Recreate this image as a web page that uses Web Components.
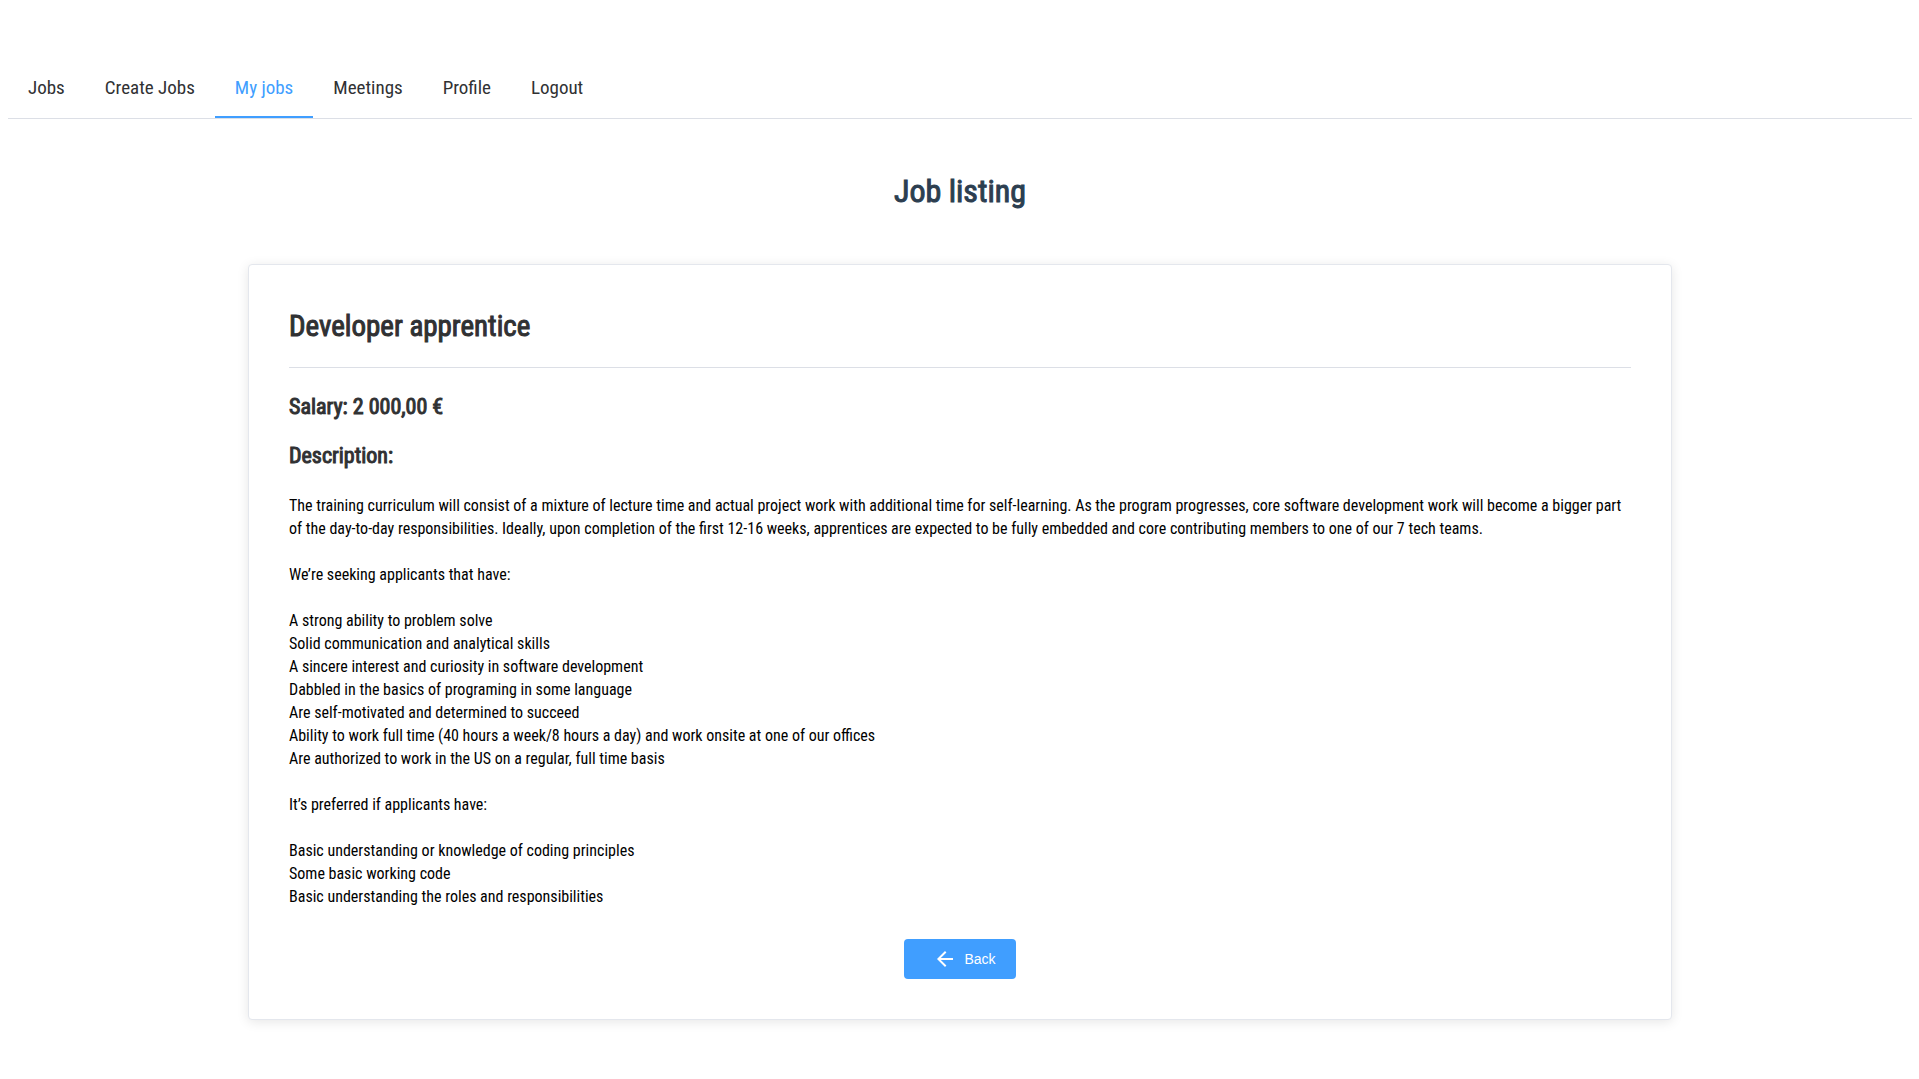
<!DOCTYPE html>
<html lang="en">
<head>
<meta charset="utf-8">
<title>Job listing</title>
<style>
body { margin: 0; padding: 58px 7px 59px 8px; background: #fff; color: #303133; font-family: "Roboto Condensed", "Liberation Sans Narrow", Roboto, sans-serif; }
</style>
</head>
<body>
<site-nav>
  <nav-item>Jobs</nav-item>
  <nav-item>Create Jobs</nav-item>
  <nav-item active>My jobs</nav-item>
  <nav-item>Meetings</nav-item>
  <nav-item>Profile</nav-item>
  <nav-item>Logout</nav-item>
</site-nav>
<job-page>
  <span slot="title">Job listing</span>
  <job-card>
    <span slot="name">Developer apprentice</span>
    <span slot="salary">2 000,00 €</span>
    <span slot="description">The training curriculum will consist of a mixture of lecture time and actual project work with additional time for self-learning. As the program progresses, core software development work will become a bigger part of the day-to-day responsibilities. Ideally, upon completion of the first 12-16 weeks, apprentices are expected to be fully embedded and core contributing members to one of our 7 tech teams.

We’re seeking applicants that have:

A strong ability to problem solve
Solid communication and analytical skills
A sincere interest and curiosity in software development
Dabbled in the basics of programing in some language
Are self-motivated and determined to succeed
Ability to work full time (40 hours a week/8 hours a day) and work onsite at one of our offices
Are authorized to work in the US on a regular, full time basis

It’s preferred if applicants have:

Basic understanding or knowledge of coding principles
Some basic working code
Basic understanding the roles and responsibilities</span>
    <back-button slot="actions">Back</back-button>
  </job-card>
</job-page>
<script>
function define(name, html) {
  const template = document.createElement('template');
  template.innerHTML = html;
  customElements.define(name, class extends HTMLElement {
    constructor() {
      super();
      this.attachShadow({ mode: 'open' }).append(template.content.cloneNode(true));
    }
  });
}
define('site-nav', `<style>
:host { display: block; border-bottom: 1px solid #dcdfe6; }
nav { display: flex; flex-wrap: wrap; }
</style><nav aria-label="Main"><slot></slot></nav>`);
define('nav-item', `<style>
:host { display: block; }
a { display: block; box-sizing: border-box; height: 60px; padding: 0 20px; line-height: 60px; font-size: 19px; color: #303133; text-decoration: none; white-space: nowrap; border-bottom: 2px solid transparent; }
:host([active]) a { color: #409eff; border-bottom-color: #409eff; }
</style><a href="#"><slot></slot></a>`);
define('job-page', `<style>
:host { display: block; }
h1 { margin: 48px 0 49px; font-size: 32px; line-height: 48px; font-weight: 400; -webkit-text-stroke: 1px; color: #2c3e50; text-align: center; }
main { margin: 0 240px; }
</style><h1><slot name="title"></slot></h1><main><slot></slot></main>`);
define('job-card', `<style>
:host { display: block; padding: 40px; border: 1px solid #e4e7ed; border-radius: 4px; background: #fff; box-shadow: 0 2px 12px 0 rgba(0,0,0,.1); }
h2, h3 { font-weight: 400; -webkit-text-stroke: 1px; }
h2 { margin: 0; padding-bottom: 20px; font-size: 29px; line-height: 42px; border-bottom: 1px solid #dcdfe6; }
h3 { margin: 26px 0 0; font-size: 22px; line-height: 25px; }
h3 + h3 { margin-top: 24px; }
p { margin: 26px 0 31px; color: #000; font-size: 16px; line-height: 23px; white-space: pre-wrap; }
footer { display: flex; justify-content: center; }
</style><h2><slot name="name"></slot></h2>
<h3>Salary: <slot name="salary"></slot></h3>
<h3>Description:</h3>
<p><slot name="description"></slot></p>
<footer><slot name="actions"></slot></footer>`);
define('back-button', `<style>
:host { display: block; }
button { display: flex; align-items: center; gap: 7px; height: 40px; padding: 0 20px 0 29px; border: 0; border-radius: 4px; background: #409eff; color: #fff; font: 14px/20px "Liberation Sans", sans-serif; cursor: pointer; }
svg { width: 24px; height: 24px; fill: #fff; }
</style><button type="button"><svg viewBox="0 0 24 24" aria-hidden="true"><path d="M20 11H7.83l5.59-5.59L12 4l-8 8 8 8 1.41-1.41L7.83 13H20v-2z"/></svg><slot></slot></button>`);
</script>
</body>
</html>
